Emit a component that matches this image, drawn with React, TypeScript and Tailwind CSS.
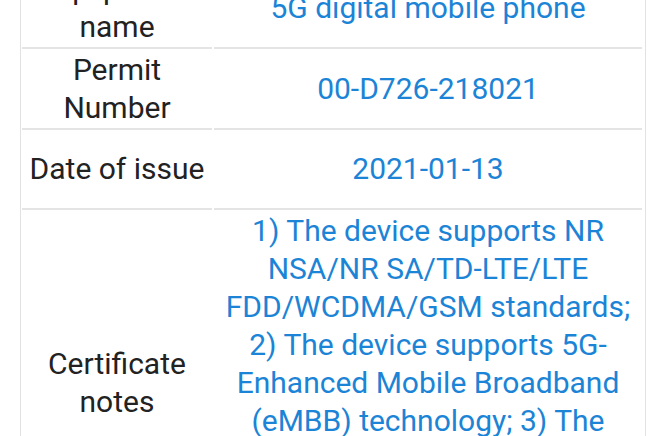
import React from 'react';

const rows: { label: string; value: string; h?: string }[] = [
  { label: 'Equipment name', value: '5G digital mobile phone', h: 'h-[80px]' },
  { label: 'Permit Number', value: '00-D726-218021', h: 'h-[81px]' },
  { label: 'Date of issue', value: '2021-01-13', h: 'h-[80px]' },
  {
    label: 'Certificate notes',
    value:
      '1) The device supports NR NSA/NR SA/TD-LTE/LTE FDD/WCDMA/GSM standards; 2) The device supports 5G-Enhanced Mobile Broadband (eMBB) technology; 3) The device supports dual-card dual-standby and the NFC module is built in.',
  },
];

export default function App() {
  return (
    <div
      className="w-[660px] h-[436px] overflow-hidden bg-white"
      style={{ fontFamily: 'Roboto, "Noto Sans", sans-serif' }}
    >
      <div className="-mt-[31px] ml-[20px] w-[626px] border-x border-[#e2e2e2] pl-[1px]">
        <div className="grid grid-cols-[190px_428px] gap-x-[2px] text-[30px] leading-[38px]">
          {rows.map((r) => (
            <React.Fragment key={r.label}>
              <div
                className={`flex items-center justify-center border-b-2 border-[#e4e4e4] px-[2px] py-[2px] text-center text-[#222222] ${r.h ?? ''}`}
              >
                {r.label}
              </div>
              <div
                className={`flex items-center justify-center border-b-2 border-[#e4e4e4] px-[4px] py-[2px] text-center text-[#1c84d6] ${r.h ?? ''}`}
              >
                {r.value}
              </div>
            </React.Fragment>
          ))}
        </div>
      </div>
    </div>
  );
}
